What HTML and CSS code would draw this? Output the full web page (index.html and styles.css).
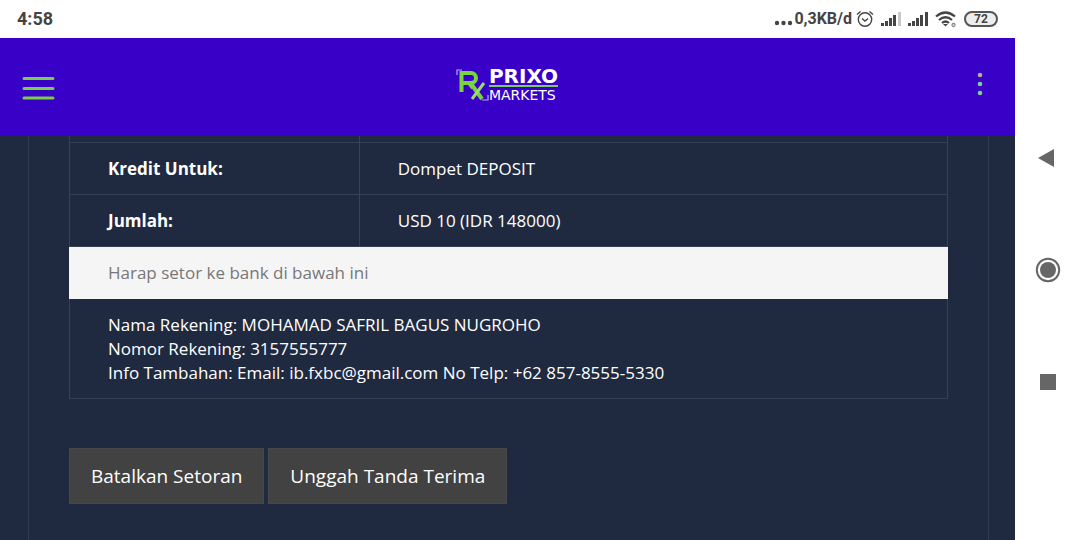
FILE: index.html
```html
<!DOCTYPE html>
<html lang="id">
<head>
<meta charset="utf-8">
<meta name="viewport" content="width=device-width, initial-scale=1">
<title>Prixo Markets</title>
<link rel="stylesheet" href="styles.css">
</head>
<body>
<div class="screen">
  <div class="status-bar">
    <span class="clock">4:58</span>
    <div class="status-icons">
      <span class="network"><svg class="more" width="20" height="16" viewBox="0 0 20 16" fill="currentColor" aria-hidden="true"><circle cx="3" cy="12" r="2.200"/><circle cx="9.500" cy="12" r="2.200"/><circle cx="16" cy="12" r="2.200"/></svg>0,3KB/d</span>
      <svg width="18" height="18" viewBox="0 0 18 18" fill="none" stroke="currentColor" stroke-width="1.4" aria-hidden="true"><circle cx="9" cy="9.5" r="6.7"/><path d="M1 4.5 4.5 1.500M17 4.500 13.500 1.500M6 8.500 9 11l3-2.500"/></svg>
      <svg class="signal" width="20" height="16" viewBox="0 0 20 16" aria-hidden="true"><path fill="currentColor" d="M0 12h3v3H0zM4 10h3v5H4zM8 7h3v8H8zM12 4h3v11h-3z"/><path fill="#c8c8c8" d="M17 1h3v14h-3z"/></svg>
      <svg class="signal" width="20" height="16" viewBox="0 0 20 16" aria-hidden="true"><path fill="currentColor" d="M0 12h3v3H0zM4 10h3v5H4zM8 7h3v8H8zM12 4h3v11h-3zM17 1h3v14h-3z"/></svg>
      <svg class="wifi" width="22" height="17" viewBox="0 0 22 17" fill="none" stroke="currentColor" stroke-width="2.200" aria-hidden="true"><path d="M1 5.500q9.500-8 19 0M4 9q6.500-5.500 13 0M7 12q3.500-3 7 0"/><path d="m8 13 2.500 2.500L13 13z" fill="currentColor" stroke="none"/><circle cx="18.500" cy="14" r="1.500" stroke="#888" stroke-width="1.300"/></svg>
      <span class="battery">72</span>
    </div>
  </div>
  <header class="app-bar">
    <button class="icon-button menu" type="button" aria-label="Menu"><svg width="34" height="26" viewBox="0 0 34 26" stroke="#78cf45" stroke-width="3" stroke-linecap="round"><path d="M3 3.500h29M3 13.500h29M3 23h29"/></svg></button>
    <a class="logo" href="#" aria-label="Prixo Markets">
      <svg class="mark" width="33" height="34" viewBox="0 0 33 34" fill="none" aria-hidden="true"><path d="M1 7V2h5M26 32h6v-5" stroke="#b4abf2" stroke-width="1.200"/><path d="M5.500 24V5H15a5 5 0 0 1 0 10H6M13 15l4 5" stroke="#78d63c" stroke-width="4"/><path d="m16 17 10 14" stroke="#78d63c" stroke-width="4"/><path d="m16 31 12-16" stroke="#9bdc70" stroke-width="3"/></svg>
      <span class="wordmark"><span class="brand">PRIXO</span><span class="brand-sub">MARKETS</span></span>
    </a>
    <button class="icon-button options" type="button" aria-label="Opsi"><svg width="6" height="24" viewBox="0 0 6 24" fill="#7fd08c"><circle cx="3" cy="3" r="2.300" fill="#b5ad96"/><circle cx="3" cy="12" r="2.300"/><circle cx="3" cy="21" r="2.300"/></svg></button>
  </header>
  <main class="content">
    <div class="panel">
      <table class="details">
        <tbody>
          <tr class="previous"><td></td><td></td></tr>
          <tr><th scope="row">Kredit Untuk:</th><td>Dompet DEPOSIT</td></tr>
          <tr><th scope="row">Jumlah:</th><td>USD 10 (IDR 148000)</td></tr>
          <tr class="notice"><td colspan="2">Harap setor ke bank di bawah ini</td></tr>
          <tr><td colspan="2">Nama Rekening: MOHAMAD SAFRIL BAGUS NUGROHO<br>Nomor Rekening: 3157555777<br>Info Tambahan: Email: ib.fxbc@gmail.com No Telp: +62 857-8555-5330</td></tr>
        </tbody>
      </table>
      <div class="actions">
        <button class="action" type="button">Batalkan Setoran</button>
        <button class="action" type="button">Unggah Tanda Terima</button>
      </div>
    </div>
  </main>
</div>
<nav class="system-nav" aria-label="Navigasi sistem">
  <button class="icon-button" type="button" aria-label="Kembali"><svg width="26" height="26" viewBox="0 0 26 26" fill="#666"><path d="M3 13 19 4v18z"/></svg></button>
  <button class="icon-button" type="button" aria-label="Beranda"><svg width="26" height="26" viewBox="0 0 26 26"><circle cx="13" cy="13" r="11.200" fill="none" stroke="#666" stroke-width="2"/><circle cx="13" cy="13" r="8" fill="#666"/></svg></button>
  <button class="icon-button" type="button" aria-label="Terbaru"><svg width="26" height="26" viewBox="0 0 26 26" fill="#666"><path d="M5 5h16v16H5z"/></svg></button>
</nav>
</body>
</html>
```
FILE: styles.css
```css
* { box-sizing: border-box; }
body {
  margin: 0;
  min-height: 100vh;
  display: flex;
  background: #fff;
  color: #fff;
  font-family: "Open Sans", "Noto Sans", sans-serif;
  font-size: 17px;
  line-height: 24px;
}
svg { display: block; flex: none; }
button { font: inherit; color: inherit; cursor: pointer; }
.screen {
  flex: 1;
  min-width: 0;
  display: flex;
  flex-direction: column;
  background: #1f2a40;
}
.status-bar {
  height: 38px;
  padding: 0 17px;
  display: flex;
  align-items: center;
  justify-content: space-between;
  background: #fff;
  color: #444;
  font-family: Roboto, sans-serif;
  font-size: 18px;
  font-weight: 700;
}
.status-icons, .network { display: flex; align-items: center; }
.status-icons { gap: 7px; font-size: 16px; }
.network { margin-right: -3px; }
.battery {
  width: 34px;
  height: 16px;
  border: 2px solid #555;
  border-radius: 8px;
  background: #eee;
  font-size: 12px;
  line-height: 12px;
  text-align: center;
}
.app-bar {
  height: 98px;
  padding: 0 32px 0 21px;
  display: grid;
  grid-template-columns: 1fr auto 1fr;
  align-items: center;
  background: #3900c7;
}
.icon-button {
  padding: 0;
  border: 0;
  background: none;
  justify-self: start;
}
.app-bar .menu { padding-top: 2px; }
.app-bar .options { justify-self: end; padding-bottom: 6px; }
.logo {
  display: flex;
  align-items: center;
  padding-left: 10px;
  color: #fff;
  text-decoration: none;
  font-family: "DejaVu Sans", sans-serif;
  margin-bottom: 4px;
}
.wordmark { display: flex; flex-direction: column; }
.brand {
  border-bottom: 2px solid #78cf6a;
  font-size: 20px;
  font-weight: 700;
  line-height: 18px;
}
.brand-sub { font-size: 14px; line-height: 16px; }
.content { flex: 1; display: flex; padding: 0 26px 0 28px; }
.panel {
  flex: 1;
  padding: 0 40px 36px;
  border: 1px solid #303b50;
  border-width: 0 1px;
}
.details {
  width: 100%;
  table-layout: fixed;
  border-collapse: collapse;
}
.details th, .details td {
  padding: 14px 38px 13px;
  border: 1px solid #354154;
  text-align: left;
}
.details .previous td { height: 6px; padding: 0; border-top: 0; }
.details .previous td:first-child { width: 33%; }
.details .notice td {
  border-color: #f5f5f5;
  background: #f5f5f5;
  color: #777;
}
.actions { display: flex; gap: 4px; padding-top: 49px; }
.action {
  padding: 14px 21px;
  border: 1px solid #484848;
  background: #424242;
  font-size: 19px;
  line-height: 26px;
}
.system-nav {
  flex: none;
  width: 65px;
  padding: 145px 0;
  display: flex;
  flex-direction: column;
  align-items: center;
  justify-content: space-between;
}
.system-nav .icon-button { align-self: center; }
```
